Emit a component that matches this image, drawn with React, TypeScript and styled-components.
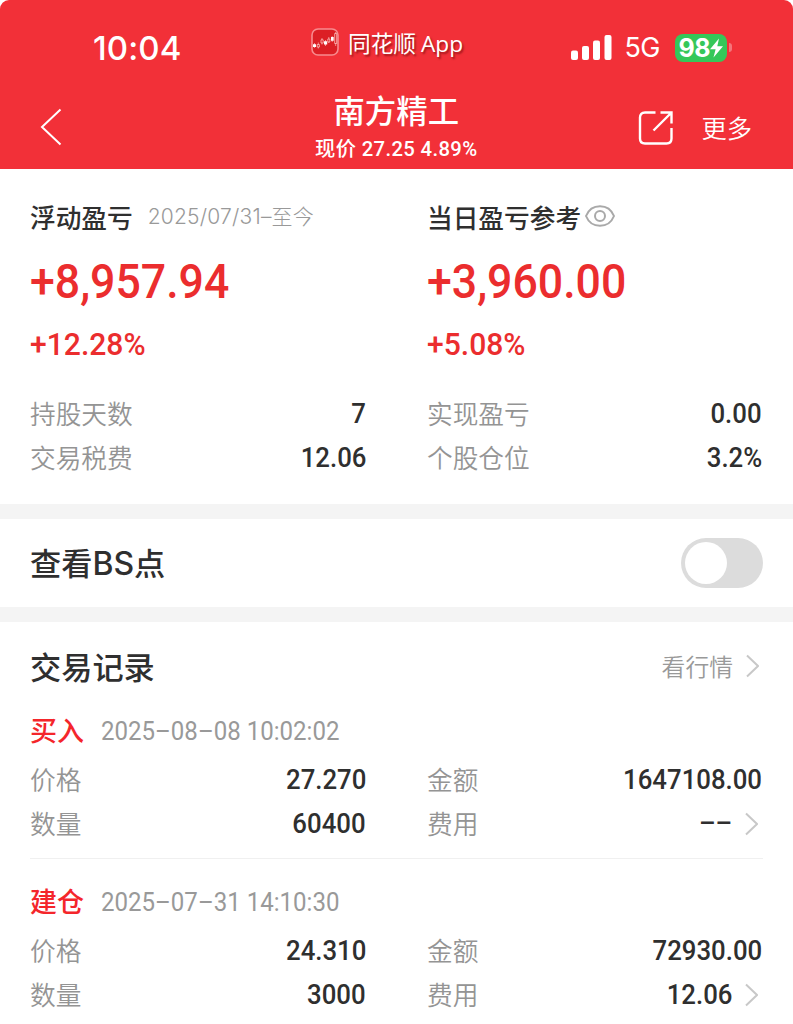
import React from "react";
import styled, { createGlobalStyle } from "styled-components";

const cjk = `"Noto Sans CJK SC", sans-serif`;

const GlobalStyle = createGlobalStyle`
  * { box-sizing: border-box; }
  body { margin: 0; background: #fff; font-family: ${cjk}; color: #2f2f2f; }
`;

const Page = styled.main`
  width: 793px;
  height: 1024px;
  overflow: hidden;
  background: #fff;
`;

const Header = styled.header`
  height: 168.5px;
  margin-right: 0.5px;
  background: #f23038;
  border-radius: 9px 9px 0 0;
  color: #fff;
`;

const StatusBar = styled.div`
  display: grid;
  grid-template-columns: 311px 1fr 222px;
  height: 86px;
  padding-top: 24px;
  align-items: start;
`;

const Clock = styled.time`
  padding-left: 93px;
  font: 550 33px/48px Inter, sans-serif;
  letter-spacing: 0.1px;
`;

const Brand = styled.div`
  display: flex;
  align-items: center;
  gap: 9px;
  height: 36px;
  font: 400 22.7px/36px "Open Sans", ${cjk};
  text-shadow: 1.5px 2px 2px rgba(90, 0, 0, 0.55);
  white-space: nowrap;
`;

const BrandText = styled.span`
  padding-top: 3px;
  word-spacing: -1px;
`;

const Signals = styled.div`
  display: flex;
  align-items: center;
  height: 47px;
`;

const Network = styled.span`
  margin: 1px 0 0 13px;
  width: 37px;
  font: 400 27px/40px Inter, sans-serif;
  letter-spacing: -0.6px;
`;

const Battery = styled.div`
  display: flex;
  align-items: center;
  margin-left: 13px;
  width: 52px;
  height: 28px;
  padding-left: 4px;
  border-radius: 8px;
  background: #35c759;
  font: 700 25px/28px Inter, sans-serif;
  letter-spacing: -0.6px;
`;

const BatteryCap = styled.i`
  width: 3px;
  height: 9px;
  margin-left: 2px;
  border-radius: 0 4px 4px 0;
  background: #f5747a;
`;

const NavBar = styled.div`
  display: grid;
  grid-template-columns: 240px 1fr 240px;
  height: 82px;
`;

const BackButton = styled.div`
  padding: 22px 0 0 40px;
`;

const StockHeading = styled.div`
  display: flex;
  flex-direction: column;
  align-items: center;
`;

const StockName = styled.h1`
  margin: 3px 0 0;
  font: 500 31.4px/42px ${cjk};
`;

const StockQuote = styled.div`
  margin-top: 4px;
  font: 500 20.3px/28px Roboto, ${cjk};
  letter-spacing: 0.35px;
  white-space: nowrap;
`;

const NavActions = styled.div`
  display: flex;
  align-items: flex-start;
  padding: 24px 0 0 85px;
`;

const More = styled.span`
  margin-left: 28px;
  font: 350 25.3px/34px ${cjk};
`;

const Summary = styled.section`
  display: grid;
  grid-template-columns: 336px 335px;
  column-gap: 61px;
  height: 335.5px;
  padding: 28px 30px 0;
`;

const SummaryTitle = styled.h2`
  display: flex;
  align-items: center;
  height: 40px;
  margin: 0;
  font: 500 25.7px/38px ${cjk};
  white-space: nowrap;
`;

const Period = styled.span`
  margin-left: 15px;
  color: #999;
  font: 300 21px/38px Inter, ${cjk};
  letter-spacing: 0.2px;
`;

const Figure = styled.span<{ $size: number; $from?: "left" | "right"; $scale?: number }>`
  display: inline-block;
  font: 500 ${(p) => p.$size}px/1 Roboto, sans-serif;
  transform: scaleX(${(p) => p.$scale ?? 0.92});
  transform-origin: ${(p) => p.$from ?? "left"} center;
  white-space: nowrap;
`;

const Amount = styled.div`
  display: flex;
  align-items: center;
  height: 66px;
  margin-top: 13px;
  color: #eb2d2e;
`;

const Percent = styled(Amount)`
  height: 44px;
  margin: 7px 0 25px;
`;

const Row = styled.div`
  display: flex;
  align-items: center;
  justify-content: space-between;
  height: 44px;
`;

const Label = styled.span`
  color: #949494;
  font: 350 25.7px/38px ${cjk};
  padding-bottom: 2px;
`;

const Value = styled.span`
  display: flex;
  align-items: center;
  color: #2f2f2f;
`;

const Band = styled.div`
  height: 14.5px;
  background: #f4f4f4;
`;

const SwitchRow = styled.section`
  display: flex;
  align-items: center;
  justify-content: space-between;
  height: 88.5px;
  padding: 0 30px;
`;

const SectionTitle = styled.h2`
  margin: 0;
  font: 500 31.2px/46px ${cjk};
`;

const Latin = styled.span`
  font-family: Inter, sans-serif;
  font-size: 32px;
  font-weight: 450;
`;

const Toggle = styled.button`
  width: 82px;
  height: 50px;
  padding: 4px;
  border: 0;
  border-radius: 25px;
  background: #dcdcdc;
`;

const Knob = styled.span`
  display: block;
  width: 42px;
  height: 42px;
  border-radius: 50%;
  background: #fff;
`;

const Records = styled.section`
  padding: 19px 30px 0;
`;

const RecordsHead = styled.div`
  display: flex;
  align-items: center;
  justify-content: space-between;
  height: 50px;
`;

const QuoteLink = styled.span`
  display: flex;
  align-items: center;
  padding-top: 1px;
  color: #999;
  font: 350 23.8px/36px ${cjk};
`;

const Trade = styled.article<{ $ruled?: boolean }>`
  height: ${(p) => (p.$ruled ? 168 : 170)}px;
  padding-top: ${(p) => (p.$ruled ? 17 : 20)}px;
  ${(p) => p.$ruled && "border-bottom: 1.5px solid #f0f0f0;"}
`;

const TradeHead = styled.div`
  display: flex;
  align-items: center;
  height: 46px;
`;

const Side = styled.strong`
  width: 70.5px;
  padding-bottom: 1px;
  color: #f4262b;
  font: 500 27px/40px ${cjk};
`;

const Stamp = styled.time`
  color: #999;
  font: 400 26px/40px Roboto, sans-serif;
  transform: scaleX(0.925);
  transform-origin: left;
  white-space: nowrap;
`;

const TradeGrid = styled.div`
  display: grid;
  grid-template-columns: 336px 335px;
  column-gap: 61px;
  margin-top: 4px;
`;

const ChevronIcon = styled.svg`
  display: block;
  margin: 0 4px 0 12px;
`;

const Chevron = () => (
  <ChevronIcon width="14" height="24" viewBox="0 0 14 24" fill="none" stroke="#c8c8c8" strokeWidth="2">
    <path d="M2 1.500 13 12 2 22.500" />
  </ChevronIcon>
);

const AppLogo = () => (
  <svg width="28" height="28" viewBox="0 0 28 28" fill="none">
    <rect x="1" y="1" width="26" height="26" rx="6" fill="#dc1f25" stroke="#f78b8e" strokeWidth="1.6" />
    <path d="M3.500 15v5M7.300 14.500v6M11 10v6.500M14.500 12v6M17.800 9v6M21.200 8v6M24.700 4v14" stroke="#ffd5d0" strokeWidth=".6" />
    <path d="M2 16.200h3v2.800H2zM13 13.300h3.200v3.200H13zM20 9h2.700v3.800H20z" fill="#fff" />
    <path d="M6.200 16.500h2.200V19H6.200zM10 11.800h2.200v3.200H10zM16.800 11h2v3h-2zM23.700 5.500h2v10h-2z" fill="#dc1f25" stroke="#ffd5d0" strokeWidth=".7" />
  </svg>
);

const Eye = () => (
  <svg width="30" height="22" viewBox="0 0 30 22" fill="none" stroke="#a9a9a9" strokeWidth="2">
    <path d="M1 11C3.500 4.800 9 1.200 15 1.200S26.500 4.800 29 11C26.500 17.200 21 20.800 15 20.800S3.500 17.200 1 11Z" />
    <circle cx="15" cy="11" r="5" />
  </svg>
);

const EyeSlot = styled.span`
  display: flex;
  margin: -1px 0 0 4px;
`;

const Stat = ({ label, value, chevron }: { label: string; value: string; chevron?: boolean }) => (
  <Row>
    <Label>{label}</Label>
    <Value>
      <Figure $size={28} $from="right">{value}</Figure>
      {chevron && <Chevron />}
    </Value>
  </Row>
);

type TradeData = { side: string; time: string; price: string; amount: string; count: string; fee: string };

const trades: TradeData[] = [
  { side: "买入", time: "2025–08–08 10:02:02", price: "27.270", amount: "1647108.00", count: "60400", fee: "––" },
  { side: "建仓", time: "2025–07–31 14:10:30", price: "24.310", amount: "72930.00", count: "3000", fee: "12.06" },
];

export default function App() {
  return (
    <Page>
      <GlobalStyle />
      <Header>
        <StatusBar>
          <Clock>10:04</Clock>
          <Brand>
            <AppLogo />
            <BrandText>同花顺 App</BrandText>
          </Brand>
          <Signals>
            <svg width="41" height="27" viewBox="0 0 41 27" fill="#fff">
              <rect x="0" y="16.500" width="7" height="9.500" rx="2" />
              <rect x="11" y="12" width="7" height="14" rx="2" />
              <rect x="22" y="6.500" width="7" height="19.500" rx="2" />
              <rect x="33.500" y="1" width="7" height="25" rx="2" />
            </svg>
            <Network>5G</Network>
            <Battery>
              98
              <svg width="13" height="20" viewBox="0 0 13 20" fill="#fff">
                <path d="M9 .5 0 11.200h5.600L3.500 19.500 13 8.300H7.300Z" />
              </svg>
            </Battery>
            <BatteryCap />
          </Signals>
        </StatusBar>
        <NavBar>
          <BackButton>
            <svg width="22" height="38" viewBox="0 0 22 38" fill="none" stroke="#fff" strokeWidth="2">
              <path d="M20.500 1.500 2 19 20.500 36.500" />
            </svg>
          </BackButton>
          <StockHeading>
            <StockName>南方精工</StockName>
            <StockQuote>现价 27.25 4.89%</StockQuote>
          </StockHeading>
          <NavActions>
            <svg width="36" height="36" viewBox="0 0 36 36" fill="none" stroke="#fff" strokeWidth="2.400">
              <path d="M17.500 2.500H7Q2 2.500 2 7.500V28.500Q2 33.500 7 33.500H28.500Q33.500 33.500 33.500 28.500V18" />
              <path d="M22.500 2.500H33.500V13.500M33 3 15.500 20.500" />
            </svg>
            <More>更多</More>
          </NavActions>
        </NavBar>
      </Header>

      <Summary>
        <div>
          <SummaryTitle>
            浮动盈亏<Period>2025/07/31–至今</Period>
          </SummaryTitle>
          <Amount><Figure $size={48.5}>+8,957.94</Figure></Amount>
          <Percent><Figure $size={31.5} $scale={0.955}>+12.28%</Figure></Percent>
          <Stat label="持股天数" value="7" />
          <Stat label="交易税费" value="12.06" />
        </div>
        <div>
          <SummaryTitle>
            当日盈亏参考<EyeSlot><Eye /></EyeSlot>
          </SummaryTitle>
          <Amount><Figure $size={48.5}>+3,960.00</Figure></Amount>
          <Percent><Figure $size={31.5} $scale={0.955}>+5.08%</Figure></Percent>
          <Stat label="实现盈亏" value="0.00" />
          <Stat label="个股仓位" value="3.2%" />
        </div>
      </Summary>

      <Band />
      <SwitchRow>
        <SectionTitle>查看<Latin>BS</Latin>点</SectionTitle>
        <Toggle type="button" role="switch" aria-checked="false"><Knob /></Toggle>
      </SwitchRow>
      <Band />

      <Records>
        <RecordsHead>
          <SectionTitle>交易记录</SectionTitle>
          <QuoteLink>看行情<Chevron /></QuoteLink>
        </RecordsHead>
        {trades.map((t, i) => (
          <Trade key={t.time} $ruled={i === 0}>
            <TradeHead>
              <Side>{t.side}</Side>
              <Stamp>{t.time}</Stamp>
            </TradeHead>
            <TradeGrid>
              <Stat label="价格" value={t.price} />
              <Stat label="金额" value={t.amount} />
              <Stat label="数量" value={t.count} />
              <Stat label="费用" value={t.fee} chevron />
            </TradeGrid>
          </Trade>
        ))}
      </Records>
    </Page>
  );
}
